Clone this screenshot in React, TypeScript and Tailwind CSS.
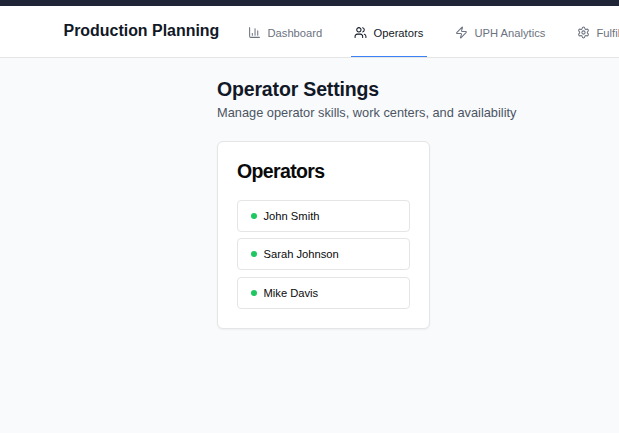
import { ChartColumn, Settings, Users, Zap, type LucideIcon } from "lucide-react";

const tabs: { label: string; Icon: LucideIcon; active?: boolean; spacing: string }[] = [
  { label: "Dashboard", Icon: ChartColumn, spacing: "w-[82px] mr-[24px] gap-[6.5px]" },
  { label: "Operators", Icon: Users, active: true, spacing: "w-[76px] mr-[25px] gap-[6.5px]" },
  { label: "UPH Analytics", Icon: Zap, spacing: "w-[98px] mr-6 gap-[6.5px]" },
  { label: "Fulfillment", Icon: Settings, spacing: "w-[90px] gap-[6.5px]" },
];

const operators = [
  { name: "John Smith", spacing: "mb-1.5" },
  { name: "Sarah Johnson", spacing: "mb-[7px]" },
  { name: "Mike Davis", spacing: "" },
];

export default function App() {
  return (
    <div className="h-[433px] w-full overflow-hidden bg-[#f9fafc] font-['Liberation_Sans',Arial,sans-serif]">
      <div className="h-1.5 bg-[#1f2437]" />
      <header className="flex h-[52px] overflow-hidden border-b border-[#e5e5e5] bg-white pl-[63.5px]">
        <h1 className="mr-6 w-[157.5px] shrink-0 pt-[13px] text-[15.95px] leading-6 font-bold whitespace-nowrap text-[#111827]">
          Production Planning
        </h1>
        <nav className="flex">
          {tabs.map(({ label, Icon, active, spacing }) => (
            <a
              key={label}
              className={`flex h-[51px] shrink-0 items-center border-b-1 pt-[3px] pl-[3px] text-[11.2px] whitespace-nowrap ${spacing} ${
                active ? "border-[#3b82f6] text-[#111827]" : "border-transparent text-[#6b7280]"
              }`}
            >
              <Icon className="mb-px size-[13px] shrink-0" strokeWidth={1.9} />
              <span className="pt-0.5">{label}</span>
            </a>
          ))}
        </nav>
      </header>
      <main className="pt-[19px] pl-[217px]">
        <h2 className="text-[19.5px] leading-6 font-bold tracking-[-0.16px] text-[#111827]">Operator Settings</h2>
        <p className="pt-px text-[12.8px] leading-[22px] text-[#4b5563]">
          Manage operator skills, work centers, and availability
        </p>
        <section className="mt-[17px] h-[188px] w-[213px] rounded-md border border-neutral-200 bg-white px-[19px] pt-[17px] shadow-xs">
          <h3 className="mb-[17px] text-[19.5px] leading-6 font-bold tracking-[-0.64px] text-neutral-950">
            Operators
          </h3>
          <ul>
            {operators.map(({ name, spacing }) => (
              <li
                key={name}
                className={`flex h-8 items-center gap-[6.5px] rounded border border-neutral-200 pl-[13px] text-[11.2px] text-neutral-950 ${spacing}`}
              >
                <span className="size-1.5 rounded-full bg-[#1fc760]" />
                <span className="leading-4">{name}</span>
              </li>
            ))}
          </ul>
        </section>
      </main>
    </div>
  );
}
